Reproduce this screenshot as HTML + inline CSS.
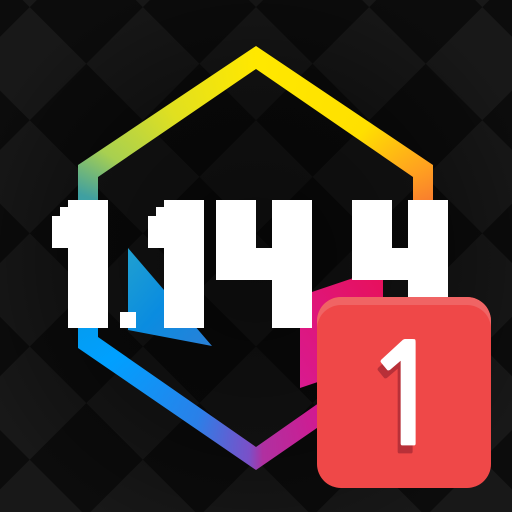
<!DOCTYPE html>
<html><head><meta charset="utf-8"><style>
html,body{margin:0;padding:0;width:512px;height:512px;overflow:hidden;}
body{position:relative;background:#0c0c0c;}
.vig{position:absolute;left:0;top:0;width:512px;height:512px;background:radial-gradient(circle at 256px 260px,rgba(0,0,0,.55) 0,rgba(0,0,0,.35) 180px,rgba(0,0,0,0) 300px);}
.hex{position:absolute;left:0;top:0;width:512px;height:512px;
background:conic-gradient(from 0deg at 256px 258px,#ffe800 0deg,#ffe000 40deg,#ffa020 62deg,#f05040 85deg,#e81a70 120deg,#e0108a 150deg,#b030a0 178deg,#7a50c8 182deg,#2a80e8 200deg,#00a0ff 235deg,#0898e0 265deg,#40a0a0 290deg,#a8d050 305deg,#e0e020 330deg,#ffe800 360deg);
clip-path:path(evenodd,"M256 46 L433 165 L433 348 L256 470 L78 348 L78 165 Z M256 69 L413 177 L413 337 L256 447 L98 337 L98 177 Z");}
.w{position:absolute;background:#fff;}
</style></head><body>
<svg style="position:absolute;left:0;top:0" width="512" height="512">
<defs>
<pattern id="ck" width="160" height="160" patternUnits="userSpaceOnUse" patternTransform="rotate(45 256 256)">
<rect width="160" height="160" fill="#0c0c0c"/><rect width="80" height="80" fill="#181818"/><rect x="80" y="80" width="80" height="80" fill="#181818"/>
</pattern>
</defs>
<rect width="512" height="512" fill="url(#ck)"/>
</svg>
<div class="vig"></div>
<div class="hex"></div>
<svg style="position:absolute;left:0;top:0" width="512" height="512">
<defs>
<linearGradient id="b" x1="0" y1="0" x2="1" y2="1"><stop offset="0" stop-color="#20a0d0"/><stop offset=".5" stop-color="#0a8ce0"/><stop offset="1" stop-color="#2a80d8"/></linearGradient>
<linearGradient id="p" x1="1" y1="0" x2="0" y2="1"><stop offset="0" stop-color="#e8105a"/><stop offset="1" stop-color="#d81a90"/></linearGradient>
</defs>
<polygon points="128,248 128,330 212,346" fill="url(#b)"/>
<polygon points="300,296 383,268 383,360 300,388" fill="url(#p)"/>
</svg>
<div class="w" style="left:68px;top:200px;width:40px;height:128px"></div>
<div class="w" style="left:52px;top:216px;width:16px;height:32px"></div>
<div class="w" style="left:60px;top:207px;width:8px;height:9px"></div>
<div class="w" style="left:120px;top:312px;width:16px;height:16px"></div>
<div class="w" style="left:164px;top:200px;width:40px;height:128px"></div>
<div class="w" style="left:148px;top:216px;width:16px;height:32px"></div>
<div class="w" style="left:156px;top:207px;width:8px;height:9px"></div>
<div class="w" style="left:216px;top:200px;width:40px;height:80px"></div>
<div class="w" style="left:216px;top:248px;width:96px;height:32px"></div>
<div class="w" style="left:272px;top:200px;width:40px;height:128px"></div>
<div class="w" style="left:352px;top:200px;width:40px;height:80px"></div>
<div class="w" style="left:352px;top:248px;width:96px;height:32px"></div>
<div class="w" style="left:408px;top:200px;width:40px;height:110px"></div>
<div style="position:absolute;left:317px;top:297px;width:174px;height:191px;border-radius:24px;background:#ef4848;box-shadow:inset 0 8px 0 #f06464;"></div>
<div style="position:absolute;left:318px;top:322px;width:174px;height:150px;overflow:hidden;text-align:center;font-family:'NanumGothic',sans-serif;font-weight:bold;font-size:140px;line-height:150px;color:#fff;text-shadow:-3px 8px 0 #b83038;">1</div>
</body></html>
